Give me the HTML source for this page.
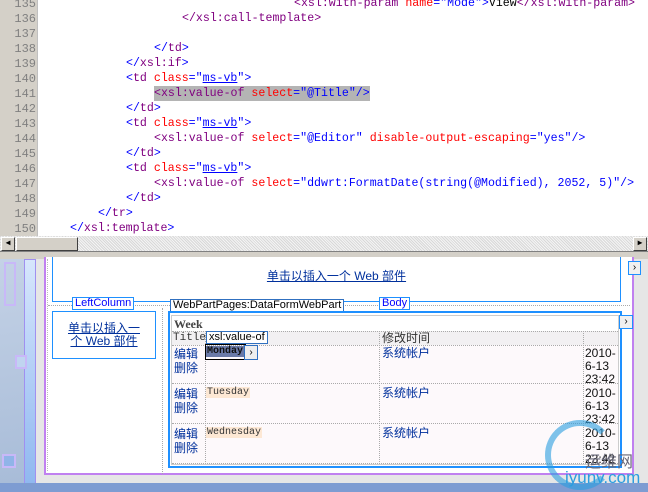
<!DOCTYPE html>
<html><head><meta charset="utf-8"><style>
*{margin:0;padding:0;box-sizing:border-box}
body{width:648px;height:492px;overflow:hidden;background:#fff;position:relative;font-family:"Liberation Mono",monospace}
.a{position:absolute}
#gut{left:0;top:0;width:38px;height:236px;background:#d4d0c8;border-right:1px solid #c0c0c0}
.ln{position:absolute;left:0;width:36px;text-align:right;font-size:12px;color:#808080;font-family:"Liberation Mono",monospace}
.cl{position:absolute;font-size:11.6px;white-space:pre;color:#0000ff;line-height:15px}
.t{color:#800080}.r{color:#ff0000}.b{color:#0000ff}.k{color:#000}.u{text-decoration:underline}
.lbl{position:absolute;background:#fff;border:1px solid #1e90ff;font-family:"Liberation Sans",sans-serif;font-size:11px;line-height:11px;padding:0 2px;height:13px}
.cell{position:absolute;font-size:12px;font-family:"Liberation Sans","Noto Sans CJK SC",sans-serif;line-height:13px}
.dh{position:absolute;border-top:1px dotted #aaa}
.dv{position:absolute;border-left:1px dotted #aaa}
</style></head><body>
<div class="a" id="gut"></div>
<div class="ln" style="top:-3px">135</div>
<div class="ln" style="top:12px">136</div>
<div class="ln" style="top:27px">137</div>
<div class="ln" style="top:42px">138</div>
<div class="ln" style="top:57px">139</div>
<div class="ln" style="top:72px">140</div>
<div class="ln" style="top:87px">141</div>
<div class="ln" style="top:102px">142</div>
<div class="ln" style="top:117px">143</div>
<div class="ln" style="top:132px">144</div>
<div class="ln" style="top:147px">145</div>
<div class="ln" style="top:162px">146</div>
<div class="ln" style="top:177px">147</div>
<div class="ln" style="top:192px">148</div>
<div class="ln" style="top:207px">149</div>
<div class="ln" style="top:222px">150</div>

<div class="cl" style="left:294px;top:-4px"><span class="t">&lt;xsl:with-param</span> <span class="r">name</span>=<span class="b">"Mode"</span>&gt;<span class="k">View</span><span class="t">&lt;/xsl:with-param&gt;</span></div>
<div class="cl t" style="left:182px;top:11px">&lt;/xsl:call-template&gt;</div>
<div class="cl" style="left:154px;top:41px">&lt;/<span class="t">td</span>&gt;</div>
<div class="cl" style="left:126px;top:56px">&lt;/<span class="t">xsl:if</span>&gt;</div>
<div class="cl" style="left:126px;top:71px">&lt;<span class="t">td</span> <span class="r">class</span>="<span class="u">ms-vb</span>"&gt;</div>
<div class="cl" style="left:154px;top:86px;background:#b4b4b4"><span class="t">&lt;xsl:value-of</span> <span class="r">select</span>="@Title"/&gt;</div>
<div class="cl" style="left:126px;top:101px">&lt;/<span class="t">td</span>&gt;</div>
<div class="cl" style="left:126px;top:116px">&lt;<span class="t">td</span> <span class="r">class</span>="<span class="u">ms-vb</span>"&gt;</div>
<div class="cl" style="left:154px;top:131px"><span class="t">&lt;xsl:value-of</span> <span class="r">select</span>="@Editor" <span class="r">disable-output-escaping</span>="yes"/&gt;</div>
<div class="cl" style="left:126px;top:146px">&lt;/<span class="t">td</span>&gt;</div>
<div class="cl" style="left:126px;top:161px">&lt;<span class="t">td</span> <span class="r">class</span>="<span class="u">ms-vb</span>"&gt;</div>
<div class="cl" style="left:154px;top:176px"><span class="t">&lt;xsl:value-of</span> <span class="r">select</span>="ddwrt:FormatDate(string(@Modified), 2052, 5)"/&gt;</div>
<div class="cl" style="left:126px;top:191px">&lt;/<span class="t">td</span>&gt;</div>
<div class="cl" style="left:98px;top:206px">&lt;/<span class="t">tr</span>&gt;</div>
<div class="cl" style="left:70px;top:221px">&lt;/<span class="t">xsl:template</span>&gt;</div>

<!-- scrollbar -->
<div class="a" style="left:0;top:236px;width:648px;height:15px;background:#e8e8e8;background-image:repeating-linear-gradient(45deg,#d8d8d8 0 1px,#f4f4f4 1px 2px)"></div>
<div class="a" style="left:1px;top:237px;width:14px;height:14px;background:#d4d0c8;border:1px solid #fff;border-right-color:#404040;border-bottom-color:#404040;font-size:8px;line-height:12px;text-align:center">◀</div>
<div class="a" style="left:16px;top:237px;width:62px;height:14px;background:#d4d0c8;border:1px solid #fff;border-right-color:#404040;border-bottom-color:#404040"></div>
<div class="a" style="left:633px;top:237px;width:14px;height:14px;background:#d4d0c8;border:1px solid #fff;border-right-color:#404040;border-bottom-color:#404040;font-size:8px;line-height:12px;text-align:center">▶</div>
<div class="a" style="left:0;top:251px;width:648px;height:8px;background:#d4d0c8;border-top:1px solid #808080"></div>

<!-- design area -->
<div class="a" style="left:0;top:259px;width:648px;height:233px;background:#e6e6e6"></div>
<div class="a" style="left:0;top:259px;width:24px;height:224px;background:linear-gradient(170deg,#c4d2e6,#a8bcd8)"></div>
<div class="a" style="left:24px;top:259px;width:12px;height:226px;background:linear-gradient(#d6e6fc,#90b8f0);border:1px solid #a090f0"></div>
<div class="a" style="left:4px;top:262px;width:12px;height:44px;border:2px solid #c8b8f8"></div>
<div class="a" style="left:15px;top:355px;width:12px;height:14px;border:2px solid #c8b8f8;background:#c0d4f0"></div>
<div class="a" style="left:2px;top:454px;width:14px;height:14px;border:2px solid #c8b8f8;background:#90b4e8"></div>
<div class="a" style="left:0;top:483px;width:648px;height:9px;background:#7e9cd2"></div>
<div class="a" style="left:44px;top:257px;width:590px;height:218px;background:#fff;border:2px solid #c080f0;border-top:none"></div>
<div class="a" style="left:47px;top:259px;width:1px;height:212px;border-left:1px dotted #bbb"></div>
<div class="a" style="left:52px;top:257px;width:569px;height:45px;border:1px solid #1e90ff;border-top:none"></div>
<div class="cell a" style="left:52px;top:270px;width:569px;text-align:center;color:#00309c;text-decoration:underline">单击以插入一个 Web 部件</div>
<div class="dh" style="left:48px;top:305px;width:582px"></div>
<div class="a" style="left:628px;top:261px;width:13px;height:14px;border:1px solid #1e90ff;background:#f0f0f0;font-size:10px;line-height:12px;text-align:center;font-family:'Liberation Sans',sans-serif">›</div>
<div class="lbl" style="left:72px;top:297px;color:#0000ff">LeftColumn</div>
<div class="lbl" style="left:170px;top:299px;color:#000;border-color:#3070c0">WebPartPages:DataFormWebPart</div>
<div class="lbl" style="left:379px;top:297px;color:#0000ff">Body</div>
<div class="a" style="left:52px;top:311px;width:104px;height:48px;border:1px solid #1e90ff"></div>
<div class="cell a" style="left:64px;top:322px;width:80px;text-align:center;color:#00309c;text-decoration:underline">单击以插入一个 Web 部件</div>
<div class="dv" style="left:162px;top:308px;height:166px"></div>
<div class="a" style="left:168px;top:311px;width:454px;height:157px;border:2px solid #1e90ff"></div>
<div class="a" style="left:171px;top:315px;width:448px;height:150px;border:1px solid #ccc;background:#fdf9fb"></div>
<div class="a" style="left:172px;top:316px;width:446px;height:15px;background:#fff"></div>
<div class="a" style="left:174px;top:317px;font-size:12px;font-weight:bold;color:#444;font-family:'Liberation Serif',serif">Week</div>
<div class="a" style="left:619px;top:315px;width:14px;height:14px;border:1px solid #1e90ff;background:#f0f0f0;font-size:10px;line-height:12px;text-align:center;font-family:'Liberation Sans',sans-serif">›</div>
<div class="a" style="left:172px;top:331px;width:446px;height:14px;background:#f2f0f2;border-top:1px dotted #aaa"></div>
<div class="a" style="left:173px;top:332px;font-size:11px;color:#333">Title</div>
<div class="cell a" style="left:382px;top:332px;color:#333">修改时间</div>
<div class="dh" style="left:172px;top:345px;width:446px"></div>
<div class="dh" style="left:172px;top:383px;width:446px"></div>
<div class="dh" style="left:172px;top:423px;width:446px"></div>
<div class="dh" style="left:172px;top:463px;width:446px"></div>
<div class="dv" style="left:205px;top:331px;height:133px"></div>
<div class="dv" style="left:379px;top:331px;height:133px"></div>
<div class="dv" style="left:583px;top:331px;height:133px"></div>
<div class="cell a" style="left:174px;top:347px;color:#00309c;line-height:14px">编辑<br>删除</div>
<div class="cell a" style="left:174px;top:387px;color:#00309c;line-height:14px">编辑<br>删除</div>
<div class="cell a" style="left:174px;top:427px;color:#00309c;line-height:14px">编辑<br>删除</div>
<div class="cell a" style="left:382px;top:347px;color:#00309c">系统帐户</div>
<div class="cell a" style="left:382px;top:387px;color:#00309c">系统帐户</div>
<div class="cell a" style="left:382px;top:427px;color:#00309c">系统帐户</div>
<div class="cell a" style="left:585px;top:347px;color:#111">2010-<br>6-13<br>23:42</div>
<div class="cell a" style="left:585px;top:387px;color:#111">2010-<br>6-13<br>23:42</div>
<div class="cell a" style="left:585px;top:427px;color:#111">2010-<br>6-13<br>23:42</div>
<div class="a" style="left:205px;top:344px;width:41px;height:16px;border:1px solid #000"></div>
<div class="a" style="left:206px;top:346px;font-size:10px;background:#6a7aa8;color:#111;font-weight:bold;padding:0 1px">Monday</div>
<div class="a" style="left:244px;top:345px;width:14px;height:15px;border:1px solid #3070c0;background:#eee;font-size:10px;line-height:13px;text-align:center;font-family:'Liberation Sans',sans-serif">›</div>
<div class="lbl" style="left:206px;top:331px;color:#000;border-color:#3070c0">xsl:value-of</div>
<div class="a" style="left:206px;top:387px;font-size:10px;background:#fde8d4;color:#333;padding:0 1px">Tuesday</div>
<div class="a" style="left:206px;top:427px;font-size:10px;background:#fde8d4;color:#333;padding:0 1px">Wednesday</div>
<div class="a" style="left:545px;top:420px;width:70px;height:70px;border-radius:50%;border:6px solid #2a9ee0;border-right-color:transparent;opacity:.6"></div>
<div class="a" style="left:585px;top:448px;font-size:16px;color:#667;font-family:'Liberation Sans','Noto Sans CJK SC',sans-serif">运维网</div>
<div class="a" style="left:565px;top:468px;font-size:17px;color:#2a9ee0;font-family:'Liberation Sans',sans-serif">iyunv.com</div>
</body></html>
